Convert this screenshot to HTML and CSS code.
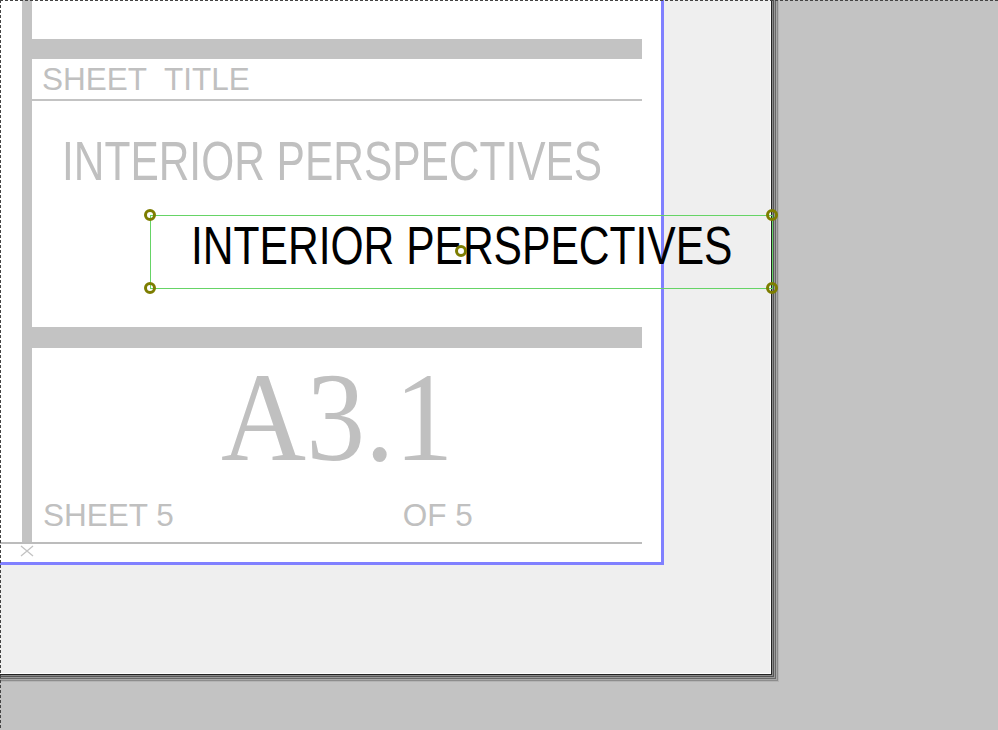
FILE: index.html
```html
<!DOCTYPE html>
<html>
<head>
<meta charset="utf-8">
<link rel="stylesheet" href="styles.css">
</head>
<body>
<div class="viewport">
  <div class="page">
    <div class="sheet">
      <div class="frame">
        <div class="spine"></div>
        <div class="col">
          <div class="gap-top"></div>
          <div class="bar"></div>
          <div class="label-row"><span class="label">SHEET&nbsp; TITLE</span></div>
          <div class="rule"></div>
          <div class="title-area"><span class="title ghost">INTERIOR PERSPECTIVES</span></div>
          <div class="bar bar2"></div>
          <div class="number-row"><span class="number">A3.1</span></div>
          <div class="sheet-row"><span class="label">SHEET 5</span><span class="label of">OF 5</span></div>
        </div>
      </div>
      <div class="base-rule"></div>
      <div class="xrow">
        <svg class="xmark" width="14" height="12" viewBox="0 0 14 12"><path d="M1 1 L13 11 M13 1 L1 11" stroke="#c3c3c3" stroke-width="1.3" fill="none"/></svg>
      </div>
    </div>
  </div>

  <div class="selection">
    <span class="title live">INTERIOR PERSPECTIVES</span>
    <span class="handle h-tl"></span>
    <span class="handle h-bl"></span>
    <span class="handle h-tr"></span>
    <span class="handle h-br"></span>
    <span class="handle h-c"></span>
  </div>

  <div class="dash-top"></div>
  <div class="dash-left"></div>
</div>
</body>
</html>
```

FILE: styles.css
```css
html, body {
  margin: 0;
  padding: 0;
}
body {
  width: 998px;
  height: 730px;
  overflow: hidden;
  background: #c3c3c3;
  font-family: "Liberation Sans", Arial, sans-serif;
}
.viewport {
  position: relative;
  width: 998px;
  height: 730px;
  overflow: hidden;
}
.page {
  width: 770px;
  height: 673px;
  margin: -10px 0 0 -10px;
  padding: 10px 0 0 10px;
  background: #efefef;
  box-shadow: 1px 1px 0 #fdfdfd, 2px 2px 0 #222, 3px 3px 0 #8a8a8a, 4px 4px 0 #555,
    5px 5px 0 #9a9a9a, 6px 6px 0 #686868, 7px 7px 0 #a8a8a8, 8px 8px 0 #8c8c8c,
    9px 9px 0 #b4b4b4;
}
.sheet {
  width: 661px;
  height: 562px;
  background: #fff;
  border-right: 3px solid #8080ff;
  border-bottom: 3px solid #8080ff;
}
.frame {
  display: flex;
  height: 542px;
  padding-left: 22px;
}
.spine {
  width: 10px;
  background: #c3c3c3;
}
.col {
  width: 610px;
  display: flex;
  flex-direction: column;
}
.gap-top { height: 39px; }
.bar {
  height: 20px;
  background: #c3c3c3;
}
.bar2 { height: 21px; }
.label {
  font-size: 31.5px;
  line-height: 31px;
  color: #c0c0c0;
  white-space: pre;
}
.label-row {
  height: 40px;
  box-sizing: border-box;
  padding: 5px 0 0 10px;
}
.rule {
  height: 2px;
  background: #c3c3c3;
}
.title-area {
  height: 226px;
  box-sizing: border-box;
  padding: 32px 0 0 30px;
}
.title {
  display: inline-block;
  font-size: 56px;
  line-height: 56px;
  white-space: nowrap;
  transform: scaleX(0.758);
  transform-origin: 0 0;
}
.ghost { color: #c0c0c0; }
.number-row {
  height: 152px;
  box-sizing: border-box;
  padding-top: 7px;
  text-align: center;
}
.number {
  display: inline-block;
  font-family: "Liberation Serif", "Times New Roman", serif;
  font-size: 126px;
  line-height: 126px;
  color: #c0c0c0;
  transform: scaleX(0.935);
}
.sheet-row {
  display: flex;
  padding-left: 11px;
}
.sheet-row .of {
  margin-left: 229px;
}
.base-rule {
  width: 642px;
  height: 2px;
  background: #bcbcbc;
}
.xrow {
  padding: 1px 0 0 20px;
  line-height: 0;
}

/* selection overlay */
.selection {
  position: absolute;
  left: 150px;
  top: 215px;
  width: 621px;
  height: 72px;
  border: 1px solid #66d466;
}
.live {
  position: absolute;
  left: 40px;
  top: 2px;
  color: #000;
  font-size: 54px;
  line-height: 54px;
  transform: scaleX(0.788);
}
.handle {
  position: absolute;
  width: 6px;
  height: 6px;
  border: 3px solid #7d7d00;
  border-radius: 50%;
}
.h-tl { left: -7px; top: -7px; }
.h-bl { left: -7px; top: 66px; }
.h-tr { left: 615px; top: -7px; }
.h-br { left: 615px; top: 66px; }
.h-c { left: 304px; top: 29px; }

.dash-top {
  position: absolute;
  left: 0;
  top: 0;
  width: 998px;
  height: 1px;
  background: repeating-linear-gradient(90deg, #444 0 3px, transparent 3px 5px);
}
.dash-left {
  position: absolute;
  left: 0;
  top: 0;
  width: 1px;
  height: 730px;
  background: repeating-linear-gradient(180deg, #444 0 3px, transparent 3px 5px);
}
```
